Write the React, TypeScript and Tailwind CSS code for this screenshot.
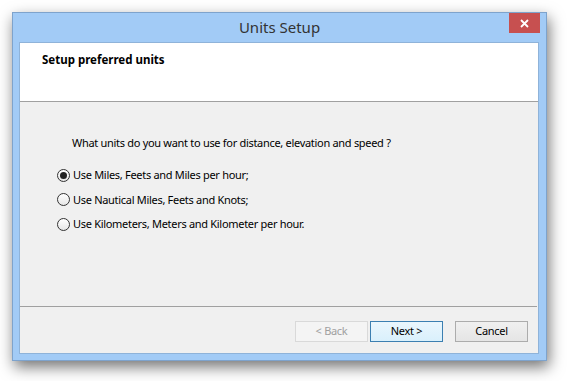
import React from "react";

function Radio({ checked }: { checked?: boolean }) {
  return (
    <span className="relative flex h-[13px] w-[13px] shrink-0 items-center justify-center rounded-full border border-[#333333] bg-[linear-gradient(#ffffff,#e6e6e6)]">
      {checked && <span className="h-[7px] w-[7px] rounded-full bg-[#222222]" />}
    </span>
  );
}

const options = [
  "Use Miles, Feets and Miles per hour;",
  "Use Nautical Miles, Feets and Knots;",
  "Use Kilometers, Meters and Kilometer per hour.",
];

export default function App() {
  return (
    <div className="h-[381px] w-[567px] bg-white pl-[12px] pt-[12px] font-['Noto_Sans',sans-serif] text-[11px] tracking-[-0.3px] text-black">
      <div className="flex h-[349px] w-[535px] flex-col border border-[#7ea3cc] bg-[#a2cbf6] shadow-[2px_6px_14px_rgba(0,0,0,0.55)]">
        <div className="relative flex h-[29px] shrink-0 items-center justify-center">
          <span className="text-[15px] leading-none tracking-normal text-[#333333]">Units Setup</span>
          <div className="absolute right-[6px] top-0 flex h-[20px] w-[31px] items-center justify-center bg-[#c75050]">
            <svg width="9" height="9" viewBox="0 0 9 9">
              <path d="M1 1 L8 8 M8 1 L1 8" stroke="#ffffff" strokeWidth="1.8" />
            </svg>
          </div>
        </div>
        <div className="ml-[6px] mr-[7px] flex h-[312px] w-[520px] flex-col border border-[#8fb3d9] bg-[#f0f0f0]">
          <div className="h-[58px] shrink-0 bg-white pl-[22px] pt-[9px]">
            <span className="text-[11.5px] font-bold leading-[16px] tracking-normal">Setup preferred units</span>
          </div>
          <div className="h-px shrink-0 bg-[#a0a0a0]" />
          <div className="h-[204px] shrink-0 pl-[37px] pt-[33px]">
            <div className="pl-[15px] leading-[16px]">What units do you want to use for distance, elevation and speed ?</div>
            <div className="mt-[16px] flex flex-col gap-[8.5px]">
              {options.map((o, i) => (
                <div key={o} className="flex h-[16px] items-center gap-[3px] leading-[16px]">
                  <Radio checked={i === 0} />
                  <span>{o}</span>
                </div>
              ))}
            </div>
          </div>
          <div className="mr-[1px] h-px shrink-0 bg-[#a0a0a0]" />
          <div className="flex items-start pt-[14px] pl-[275px]">
            <button className="flex h-[21px] w-[73px] items-center justify-center border border-[#d9d9d9] bg-[#f4f4f4] text-[#a0a0a0]">&lt; Back</button>
            <button className="ml-[2px] flex h-[21px] w-[73px] items-center justify-center border border-[#3c7fb1] bg-[linear-gradient(#eaf6fd,#d9f0fc)] text-black">Next &gt;</button>
            <button className="ml-[12px] flex h-[21px] w-[73px] items-center justify-center border border-[#acacac] bg-[linear-gradient(#f0f0f0,#e5e5e5)] text-black">Cancel</button>
          </div>
        </div>
      </div>
    </div>
  );
}
